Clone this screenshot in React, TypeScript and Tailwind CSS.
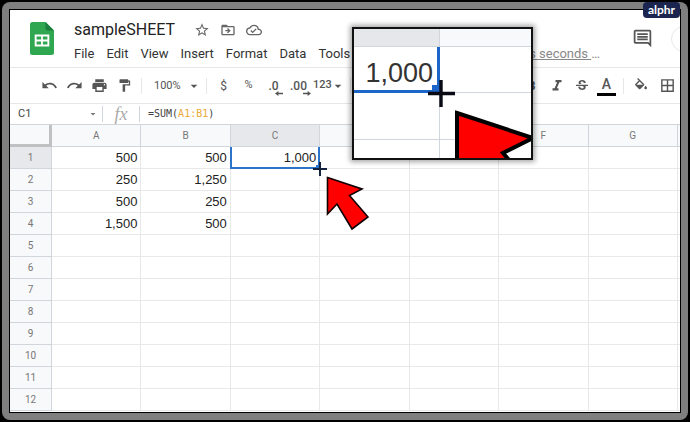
import React, { useState } from "react";
import {
  MdArrowDropDown,
  MdBorderAll,
  MdDriveFileMoveOutline,
  MdFormatItalic,
  MdFormatPaint,
  MdOutlineCloudDone,
  MdOutlineComment,
  MdPrint,
  MdStarOutline,
  MdStrikethroughS,
} from "react-icons/md";

const menus = ["File", "Edit", "View", "Insert", "Format", "Data", "Tools"];

const columns = ["A", "B", "C", "D", "E", "F", "G"];

const rows: string[][] = [
  ["500", "500", "1,000"],
  ["250", "1,250"],
  ["500", "250"],
  ["1,500", "500"],
  [],
  [],
  [],
  [],
  [],
  [],
  [],
  [],
];

interface ToolButtonProps {
  label: string;
  children: React.ReactNode;
}

const ToolButton: React.FC<ToolButtonProps> = ({ label, children }) => (
  <button
    type="button"
    aria-label={label}
    className="flex h-6 w-[25px] shrink-0 items-center justify-center"
  >
    {children}
  </button>
);

const Divider: React.FC = () => <div className="mx-1 h-4 w-px shrink-0 bg-gray-200" />;

const SheetsLogo: React.FC = () => (
  <svg viewBox="0 0 24 33" className="h-[33px] w-6 shrink-0" aria-hidden="true">
    <path d="M2.5 0H15.5L24 8.5V30.5A2.3 2.3 0 0 1 21.7 33H2.3A2.3 2.3 0 0 1 0 30.5V2.5A2.5 2.5 0 0 1 2.5 0Z" fill="#2fa650" />
    <path d="M15.5 0L24 8.5H17.5A2 2 0 0 1 15.5 6.5Z" fill="#1a7f3c" />
    <path d="M4.7 12.5H19.3V24.5H4.7Z M6.6 14.4V17.6H11.1V14.4Z M12.9 14.4V17.6H17.4V14.4Z M6.6 19.4V22.6H11.1V19.4Z M12.9 19.4V22.6H17.4V19.4Z" fill="#fff" fillRule="evenodd" />
  </svg>
);

const UndoIcon: React.FC = () => (
  <svg viewBox="0 0 24 24" className="h-[17px] w-[17px]" fill="currentColor" aria-hidden="true">
    <path d="M12.5 8c-2.65 0-5.05.99-6.9 2.6L2 7v9h9l-3.62-3.62c1.39-1.16 3.16-1.88 5.12-1.88 3.54 0 6.55 2.31 7.6 5.5l2.37-.78C21.08 11.03 17.15 8 12.5 8z" />
  </svg>
);

const RedoIcon: React.FC = () => (
  <svg viewBox="0 0 24 24" className="h-[17px] w-[17px]" fill="currentColor" aria-hidden="true">
    <path d="M18.4 10.6C16.55 8.99 14.15 8 11.5 8c-4.65 0-8.58 3.03-9.96 7.22L3.9 16c1.05-3.19 4.05-5.5 7.6-5.5 1.95 0 3.73.72 5.12 1.88L13 16h9V7l-3.6 3.6z" />
  </svg>
);

const BucketIcon: React.FC = () => (
  <svg viewBox="0 0 24 24" className="h-4 w-4" fill="currentColor" aria-hidden="true">
    <path d="M16.56 8.94L7.62 0 6.21 1.41l2.38 2.38-5.15 5.15c-.59.59-.59 1.54 0 2.12l5.5 5.5c.29.29.68.44 1.06.44s.77-.15 1.06-.44l5.5-5.5c.59-.58.59-1.53 0-2.12zM5.21 10L10 5.21 14.79 10H5.21zM19 11.5s-2 2.17-2 3.5c0 1.1.9 2 2 2s2-.9 2-2c0-1.33-2-3.5-2-3.5z" />
  </svg>
);

const DecimalIcon: React.FC<{ text: string; more?: boolean }> = ({ text, more }) => (
  <span className="relative text-[12px] leading-4 font-medium">
    {text}
    <svg viewBox="0 0 8 5" className="absolute -right-1 -bottom-[2px] h-[5px] w-2" aria-hidden="true">
      <path
        d={more ? "M0 1.8H4.6V0L8 2.5L4.6 5V3.2H0Z" : "M8 1.8H3.4V0L0 2.5L3.4 5V3.2H8Z"}
        fill="currentColor"
      />
    </svg>
  </span>
);

const Header: React.FC = () => {
  const [title, setTitle] = useState("sampleSHEET");

  return (
    <header className="flex h-[58px] shrink-0 items-start border-b border-gray-200 pl-5">
      <div className="pt-3">
        <SheetsLogo />
      </div>
      <div className="min-w-0 pt-2 pl-5">
        <div className="flex h-6 items-center gap-[10px] text-[#666]">
          <input
            aria-label="Document title"
            className="w-[110px] bg-transparent text-[16px] leading-6 text-[#222] outline-none"
            value={title}
            onChange={(e) => setTitle(e.target.value)}
          />
          <button type="button" aria-label="Star">
            <MdStarOutline className="h-4 w-4" />
          </button>
          <button type="button" aria-label="Move">
            <MdDriveFileMoveOutline className="h-4 w-4" />
          </button>
          <button type="button" aria-label="Saved to cloud">
            <MdOutlineCloudDone className="h-4 w-4" />
          </button>
        </div>
        <nav className="flex h-6 items-center gap-3 text-[13px] text-[#333]">
          {menus.map((menu) => (
            <button key={menu} type="button">
              {menu}
            </button>
          ))}
        </nav>
      </div>
      <div className="flex min-w-0 flex-1 items-start justify-end">
        <a href="#history" className="mt-8 mr-8 h-6 text-[13px] leading-6 whitespace-nowrap text-[#888]">
          <span className="underline">Last edit was seconds </span>…
        </a>
        <button type="button" aria-label="Comments" className="mt-[18px] mr-[18px] text-[#555]">
          <MdOutlineComment className="h-[21px] w-[21px]" />
        </button>
        <div className="mt-4 h-[26px] w-[9px] overflow-hidden">
          <button type="button" aria-label="Share" className="h-[26px] w-[26px] rounded-full border border-gray-200" />
        </div>
      </div>
    </header>
  );
};

const Toolbar: React.FC = () => (
  <div className="flex h-9 shrink-0 items-center border-b border-gray-200 pl-[27px] text-[12px] text-[#555]">
    <ToolButton label="Undo">
      <UndoIcon />
    </ToolButton>
    <ToolButton label="Redo">
      <RedoIcon />
    </ToolButton>
    <ToolButton label="Print">
      <MdPrint className="h-[17px] w-[17px]" />
    </ToolButton>
    <ToolButton label="Paint format">
      <MdFormatPaint className="h-[15px] w-[15px]" />
    </ToolButton>
    <Divider />
    <div className="relative ml-2 flex w-12 items-center">
      <select aria-label="Zoom" defaultValue="100%" className="w-full appearance-none bg-transparent text-[11px] leading-4">
        <option>100%</option>
        <option>75%</option>
        <option>50%</option>
      </select>
      <MdArrowDropDown className="pointer-events-none absolute right-0 h-4 w-4" />
    </div>
    <Divider />
    <ToolButton label="Format as currency">$</ToolButton>
    <ToolButton label="Format as percent">
      <span className="text-[11px]">%</span>
    </ToolButton>
    <ToolButton label="Decrease decimal places">
      <DecimalIcon text=".0" />
    </ToolButton>
    <ToolButton label="Increase decimal places">
      <DecimalIcon text=".00" more />
    </ToolButton>
    <button type="button" aria-label="More formats" className="ml-[2px] flex items-center text-[11px] font-medium">
      123
      <MdArrowDropDown className="-ml-[2px] h-4 w-4" />
    </button>
    <Divider />
    <div className="ml-auto flex items-center">
      <ToolButton label="Bold">
        <b>B</b>
      </ToolButton>
      <ToolButton label="Italic">
        <MdFormatItalic className="h-[18px] w-[18px]" />
      </ToolButton>
      <ToolButton label="Strikethrough">
        <MdStrikethroughS className="h-4 w-4" />
      </ToolButton>
      <ToolButton label="Text color">
        <span className="flex w-[19px] flex-col items-center border-b-[3px] border-black text-[14px] leading-[18px] font-medium">
          A
        </span>
      </ToolButton>
      <Divider />
      <div className="flex gap-[2px]">
        <ToolButton label="Fill color">
          <BucketIcon />
        </ToolButton>
        <ToolButton label="Borders">
          <MdBorderAll className="h-[17px] w-[17px]" />
        </ToolButton>
      </div>
    </div>
  </div>
);

const FormulaBar: React.FC = () => (
  <div className="flex h-[21px] shrink-0 items-center border-b border-gray-300 pl-2 text-[#444]">
    <input aria-label="Name box" className="w-[69px] bg-transparent text-[11px] leading-4 outline-none" defaultValue="C1" />
    <MdArrowDropDown className="h-3 w-3 text-[#777]" />
    <div className="ml-[3px] h-4 w-px bg-gray-300" />
    <span className="w-9 text-center font-['Liberation_Serif',serif] text-[18px] leading-4 text-[#aaa] italic">fx</span>
    <div className="h-4 w-px bg-gray-300" />
    <div role="textbox" aria-label="Formula" className="pl-2 font-['DejaVu_Sans_Mono',monospace] text-[10px] leading-4">
      =SUM(<span className="text-[#eba937]">A1:B1</span>)
    </div>
  </div>
);

const Pointer: React.FC = () => (
  <svg viewBox="0 0 43 55" className="absolute top-[29px] left-[95px] h-[55px] w-[43px]" aria-hidden="true">
    <path
      d="M1.5 1.5L36 13L23.5 19.5L42 41L26 53L11 28L1.5 38Z"
      fill="#fe0000"
      stroke="#100"
      strokeWidth="1.6"
    />
  </svg>
);

const Grid: React.FC = () => (
  <table className="w-full table-fixed border-separate border-spacing-0">
    <colgroup>
      <col className="w-[42px]" />
      {columns.map((column) => (
        <col key={column} />
      ))}
      <col className="w-[2px]" />
    </colgroup>
    <thead>
      <tr className="h-[22px] bg-[#f8f9fa] text-[10px] text-[#777]">
        <td className="border-r-[3px] border-b-[3px] border-[#c0c1c3] p-0" />
        {columns.map((column) => (
          <th
            key={column}
            scope="col"
            className={
              column === "C"
                ? "border-r border-b border-gray-300 bg-[#e6e8eb] p-0 font-normal"
                : "border-r border-b border-gray-300 p-0 font-normal"
            }
          >
            {column}
          </th>
        ))}
        <td className="border-b border-gray-300 p-0" />
      </tr>
    </thead>
    <tbody>
      {rows.map((row, r) => (
        <tr key={r} className="h-[22px]">
          <th
            scope="row"
            className={
              r === 0
                ? "border-r border-b border-gray-300 bg-[#e6e8eb] p-0 text-[10px] font-normal text-[#777]"
                : "border-r border-b border-gray-300 bg-[#f8f9fa] p-0 text-[10px] font-normal text-[#777]"
            }
          >
            {r + 1}
          </th>
          {columns.map((column, c) =>
            r === 0 && column === "C" ? (
              <td key={column} className="relative p-0">
                <div className="-ml-px h-[22px] border-x-2 border-b-2 border-[#2b74c9] pr-[2px] text-right font-['Liberation_Sans',sans-serif] text-[13px] leading-[22px] text-[#222]">
                  {row[c]}
                </div>
                <svg viewBox="0 0 14 14" className="absolute -right-[7px] -bottom-[7px] z-10 h-[14px] w-[14px]" aria-hidden="true">
                  <path d="M3 3H8V8H3Z" fill="#2b74c9" />
                  <path d="M7 0V14M0 7H14" stroke="#14213d" strokeWidth="2" />
                </svg>
                <Pointer />
              </td>
            ) : (
              <td
                key={column}
                className="border-r border-b border-[#e8e8e8] p-0 pr-[3px] text-right font-['Liberation_Sans',sans-serif] text-[13px] leading-[21px] text-[#222]"
              >
                {row[c]}
              </td>
            )
          )}
          <td className="border-b border-[#e8e8e8] p-0" />
        </tr>
      ))}
    </tbody>
  </table>
);

// Enlarged view of the fill handle, floating over the sheet
const Magnifier: React.FC = () => (
  <div className="absolute top-[17px] left-[342px] z-20 h-[133px] w-[181px] overflow-hidden border-2 border-[#111] bg-white shadow-[0_0_5px_2px_rgba(0,0,0,0.35)]">
    <div className="grid h-full grid-cols-[86px_1fr] grid-rows-[18px_46px_47px_1fr]">
      <div className="border-r border-b border-gray-300 bg-[#e6e7ea]" />
      <div className="border-b border-gray-300 bg-[#f8f9fa]" />
      <div className="border-r-[3px] border-b-[3px] border-[#1c66c9] pr-1 text-right font-['Liberation_Sans',sans-serif] text-[27px] leading-[52px] text-[#333]">
        1,000
      </div>
      <div className="border-b border-gray-300" />
      <div className="border-r border-b border-gray-300" />
      <div className="border-b border-gray-300" />
      <div className="border-r border-gray-300" />
      <div />
    </div>
    <svg viewBox="0 0 177 129" className="absolute inset-0 h-[129px] w-[177px]" aria-hidden="true">
      <path d="M78 56H86V65H78Z" fill="#1c66c9" />
      <path d="M87 51V78M74 64.5H101" stroke="#0a0a14" strokeWidth="3.4" />
      <path d="M103 84L179 109L149 124L168 146L103 146Z" fill="#fe0000" stroke="#000" strokeWidth="4" />
    </svg>
  </div>
);

const App: React.FC = () => {
  return (
    <div className="flex min-h-screen flex-col bg-black p-[2px] font-[Roboto,sans-serif]">
      <div className="relative flex flex-1 flex-col rounded-lg bg-[#7f7f7f] p-[7px]">
        <main className="relative flex flex-1 flex-col overflow-hidden border border-black bg-white">
          <Header />
          <Toolbar />
          <FormulaBar />
          <Grid />
          <Magnifier />
        </main>
        <div className="absolute top-0 right-2 z-30 flex h-4 w-[37px] items-center justify-center rounded-sm bg-[#1b2550] font-[Lato,sans-serif] text-[12px] leading-4 font-bold text-white">
          alphr
        </div>
      </div>
    </div>
  );
};

export default App;
